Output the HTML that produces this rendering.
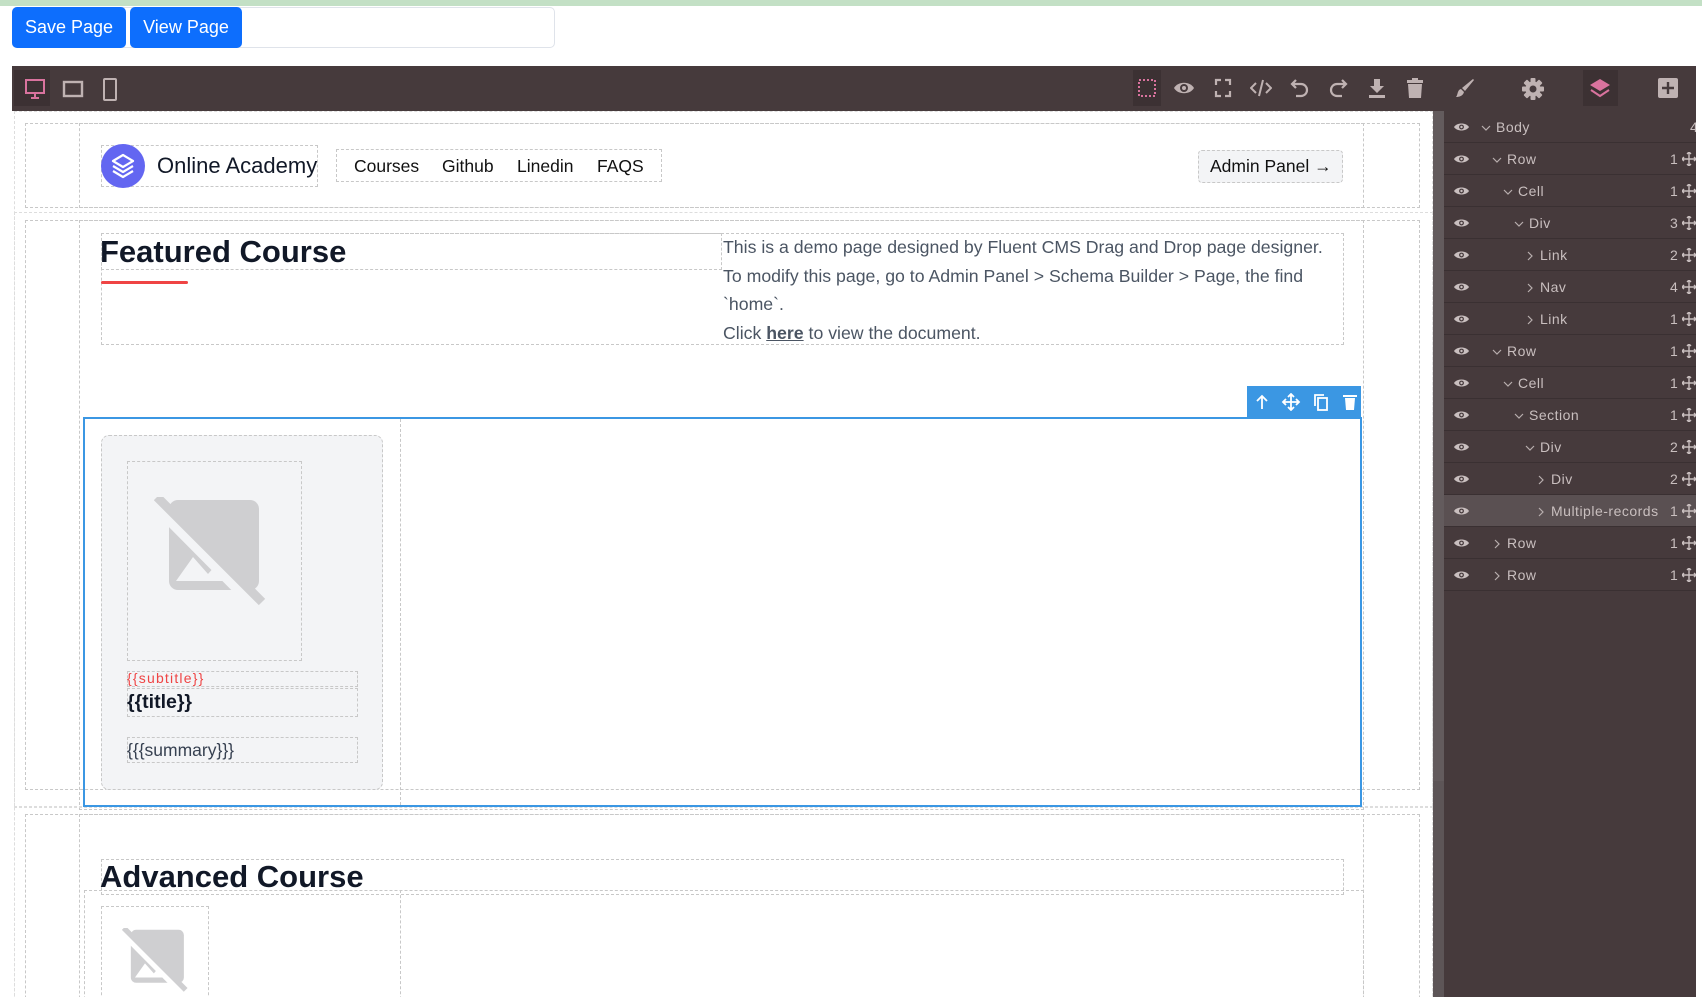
<!DOCTYPE html>
<html><head><meta charset="utf-8"><style>
*{box-sizing:border-box;margin:0;padding:0}
html,body{width:1702px;height:997px;overflow:hidden}
body{background:#fff;font-family:"Liberation Sans",sans-serif;position:relative}
#wrap{position:absolute;left:0;top:0;width:1702px;height:997px;overflow:hidden}
.a{position:absolute}
.d{position:absolute;border:1px dashed #c8c8c8}
.btn{position:absolute;top:7px;height:41px;background:#0d6efd;color:#fff;font-size:18px;border-radius:5px;line-height:41px;text-align:center}
.tb{position:absolute;top:66px;left:12px;width:1684px;height:45px;background:#463a3c}
.ic{position:absolute;top:78px}
.lp{position:absolute;left:1444px;top:111px;width:252px;height:886px;background:#463a3c;overflow:hidden}
.lr{position:absolute;left:0;width:252px;height:32px;border-bottom:1px solid #3a3032;color:#c9bfbf;font-size:14px;letter-spacing:.5px}
.lr span{position:absolute;top:8px}
.eye{position:absolute;left:10px;top:11px}
.n{position:absolute;left:226px;top:8px}
.mv{position:absolute;left:238px;top:9px}
.ch{position:absolute;top:12px}
</style></head><body><div id="wrap">
<div class="a" style="left:0;top:0;width:1702px;height:6px;background:#c3e0c5"></div>
<div class="a" style="left:12px;top:7px;width:543px;height:41px;border:1px solid #dfe3ea;border-radius:5px"></div>
<div class="btn" style="left:12px;width:114px">Save Page</div>
<div class="btn" style="left:130px;width:112px">View Page</div>

<div class="tb"></div>
<div class="a" style="left:14px;top:70px;width:36px;height:36px;background:#3c3133"></div>
<svg class="ic" style="left:24px" width="22" height="22" viewBox="0 0 22 22" fill="none" stroke="#d9739e" stroke-width="2"><rect x="2" y="2" width="18" height="13"/><path d="M11 15v4M7 20h8"/></svg>
<svg class="ic" style="left:62px" width="22" height="22" viewBox="0 0 22 22" fill="none" stroke="#bfb2b2" stroke-width="2.4"><rect x="2" y="4" width="18" height="14"/></svg>
<svg class="ic" style="left:102px" width="16" height="24" viewBox="0 0 16 24" fill="none" stroke="#bfb2b2" stroke-width="2"><rect x="2" y="1" width="12" height="21" rx="1"/></svg>
<div class="a" style="left:1133px;top:70px;width:28px;height:36px;background:#3c3133"></div>
<svg class="ic" style="left:1137px" width="20" height="20"><rect x="2" y="2" width="16" height="16" fill="none" stroke="#d9739e" stroke-width="2" stroke-dasharray="2 2"/></svg>
<svg class="ic" style="left:1173px" width="22" height="20" viewBox="0 0 22 20"><path d="M1 10C5 3 17 3 21 10C17 17 5 17 1 10Z" fill="#bfb2b2"/><circle cx="11" cy="10" r="4" fill="#463a3c"/><circle cx="11" cy="10" r="2" fill="#bfb2b2"/></svg>
<svg class="ic" style="left:1214px" width="18" height="20" fill="none" stroke="#bfb2b2" stroke-width="2.2"><path d="M2 7V2h5M11 2h5v5M16 13v5h-5M7 18H2v-5"/></svg>
<svg class="ic" style="left:1250px" width="22" height="20" fill="none" stroke="#bfb2b2" stroke-width="2"><path d="M6 5L1 10l5 5M16 5l5 5-5 5M13 2L9 18"/></svg>
<svg class="ic" style="left:1290px" width="20" height="20" fill="none" stroke="#bfb2b2" stroke-width="2.2"><path d="M6 2L2 6l4 4M2 6h9a6 6 0 010 12H6"/></svg>
<svg class="ic" style="left:1328px" width="20" height="20" fill="none" stroke="#bfb2b2" stroke-width="2.2"><path d="M14 2l4 4-4 4M18 6H9a6 6 0 000 12h5"/></svg>
<svg class="ic" style="left:1368px" width="18" height="20" fill="#bfb2b2"><path d="M6 1h6v7h4l-7 7-7-7h4z"/><rect x="1" y="17" width="16" height="3"/></svg>
<svg class="ic" style="left:1407px" width="16" height="20" fill="#bfb2b2"><rect x="0" y="2" width="16" height="3"/><rect x="5" y="0" width="6" height="2"/><path d="M1 6h14l-1 14H2z"/></svg>
<svg class="ic" style="left:1455px" width="20" height="20" fill="#bfb2b2"><path d="M18 1l1 1-9 11-3-3z"/><path d="M6 11l3 3c-1 4-5 5-8 5 2-2 1-7 5-8z"/></svg>
<svg class="ic" style="left:1522px" width="22" height="22" viewBox="0 0 22 22"><g fill="#bfb2b2"><circle cx="11" cy="11" r="7.5"/><rect x="8.5" y="0" width="5" height="22" rx="1"/><rect x="8.5" y="0" width="5" height="22" rx="1" transform="rotate(45 11 11)"/><rect x="8.5" y="0" width="5" height="22" rx="1" transform="rotate(90 11 11)"/><rect x="8.5" y="0" width="5" height="22" rx="1" transform="rotate(135 11 11)"/></g><circle cx="11" cy="11" r="3.5" fill="#463a3c"/></svg>
<div class="a" style="left:1583px;top:70px;width:35px;height:36px;background:#3c3133"></div>
<svg class="ic" style="left:1589px" width="22" height="22" viewBox="0 0 22 22"><path d="M11 1l10 6-10 6L1 7z" fill="#d9739e"/><path d="M2 12l9 6 9-6" fill="none" stroke="#d9739e" stroke-width="2"/></svg>
<svg class="ic" style="left:1658px" width="20" height="20"><rect width="20" height="20" rx="2" fill="#bfb2b2"/><path d="M10 4v12M4 10h12" stroke="#463a3c" stroke-width="2.4"/></svg>

<div class="a" style="left:1433px;top:111px;width:11px;height:886px;background:#5d5557"></div>
<div class="a" style="left:1433px;top:111px;width:11px;height:670px;background:#635b5d"></div>
<div class="d" style="left:14px;top:111px;width:1419px;height:920px;border-color:#ddd"></div>
<div class="d" style="left:25px;top:123px;width:1395px;height:85px"></div>
<div class="d" style="left:79px;top:123px;width:1285px;height:85px"></div>
<div class="d" style="left:101px;top:145px;width:217px;height:42px"></div>
<svg class="a" style="left:100px;top:143px" width="46" height="46" viewBox="0 0 46 46"><circle cx="23" cy="23" r="22" fill="#6366f1"/><path d="M23 12l10 6-10 6-10-6z M13 23l10 6 10-6 M13 28l10 6 10-6" fill="none" stroke="#fff" stroke-width="2.2" stroke-linejoin="round"/></svg>
<div class="a" style="left:157px;top:153px;font-size:22px;color:#111827">Online Academy</div>
<div class="d" style="left:336px;top:149px;width:326px;height:33px"></div>
<div class="a" style="left:354px;top:156px;font-size:17.5px;color:#111">Courses</div>
<div class="a" style="left:442px;top:156px;font-size:17.5px;color:#111">Github</div>
<div class="a" style="left:517px;top:156px;font-size:17.5px;color:#111">Linedin</div>
<div class="a" style="left:597px;top:156px;font-size:17.5px;color:#111">FAQS</div>
<div class="d" style="left:1198px;top:150px;width:145px;height:33px;background:#f3f4f6;border-radius:4px"></div>
<div class="a" style="left:1210px;top:156px;font-size:17.5px;color:#111">Admin Panel →</div>

<div class="d" style="left:14px;top:212px;width:1419px;height:595px;border-color:#ddd"></div>
<div class="d" style="left:25px;top:220px;width:1395px;height:570px"></div>
<div class="d" style="left:79px;top:220px;width:1285px;height:590px"></div>
<div class="d" style="left:101px;top:233px;width:1243px;height:112px"></div>
<div class="d" style="left:101px;top:233px;width:621px;height:37px"></div>
<div class="a" style="left:100px;top:234px;font-size:31px;font-weight:600;color:#111827">Featured Course</div>
<div class="a" style="left:101px;top:281px;width:87px;height:3px;background:#ef4444;border-radius:2px"></div>
<div class="a" style="left:723px;top:233px;font-size:17.7px;line-height:28.7px;color:#4b5563">This is a demo page designed by Fluent CMS Drag and Drop page designer.<br>To modify this page, go to Admin Panel &gt; Schema Builder &gt; Page, the find<br>`home`.<br>Click <u style="font-weight:bold">here</u> to view the document.</div>

<div class="a" style="left:1247px;top:386px;width:114px;height:31px;background:#3b97e3"></div>
<svg class="a" style="left:1253px;top:393px" width="104" height="18" fill="none" stroke="#fff" stroke-width="1.8"><path d="M9 16V3M4 8l5-5 5 5"/><path d="M38 1v16M30 9h16M35 4l3-3 3 3M35 14l3 3 3-3M33 6l-3 3 3 3M43 6l3 3-3 3"/><rect x="65" y="5" width="9" height="12"/><path d="M62 13V2h9"/><path d="M92 5h10l-1 12h-8z" fill="#fff" stroke="none"/><rect x="90" y="2" width="14" height="2" fill="#fff" stroke="none"/></svg>
<div class="a" style="left:83px;top:417px;width:1279px;height:390px;border:2px solid #3b97e3"></div>
<div class="d" style="left:400px;top:419px;width:1px;height:386px;border-width:0 0 0 1px"></div>
<div class="d" style="left:101px;top:435px;width:282px;height:355px;background:#f3f4f6;border-radius:8px"></div>
<div class="d" style="left:127px;top:461px;width:175px;height:200px"></div>
<svg class="a" style="left:154px;top:497px" width="112" height="112" viewBox="0 0 112 112"><rect x="15" y="3" width="90" height="90" rx="9" fill="#cfcfd1"/><path d="M0 5L100 106" stroke="#f3f4f6" stroke-width="14"/><path d="M3 0L108 105" stroke="#cfcfd1" stroke-width="9"/><path d="M22 84l17-24 15 17 7-8 15 15z" fill="#f3f4f6"/></svg>
<div class="d" style="left:127px;top:671px;width:231px;height:16px"></div>
<div class="a" style="left:127px;top:670px;font-size:14px;letter-spacing:1.2px;color:#ef4444">{{subtitle}}</div>
<div class="d" style="left:127px;top:688px;width:231px;height:29px"></div>
<div class="a" style="left:127px;top:691px;font-size:19.5px;font-weight:600;color:#111827">{{title}}</div>
<div class="d" style="left:127px;top:737px;width:231px;height:26px"></div>
<div class="a" style="left:127px;top:740px;font-size:17.5px;color:#374151">{{{summary}}}</div>

<div class="d" style="left:14px;top:807px;width:1419px;height:240px;border-color:#ddd"></div>
<div class="d" style="left:25px;top:814px;width:1395px;height:240px"></div>
<div class="d" style="left:79px;top:814px;width:1285px;height:240px"></div>
<div class="d" style="left:101px;top:859px;width:1243px;height:36px"></div>
<div class="a" style="left:100px;top:859px;font-size:31px;font-weight:600;color:#111827">Advanced Course</div>
<div class="d" style="left:84px;top:890px;width:1280px;height:160px"></div>
<div class="d" style="left:400px;top:890px;width:1px;height:160px;border-width:0 0 0 1px"></div>
<div class="d" style="left:101px;top:906px;width:108px;height:140px"></div>
<svg class="a" style="left:122px;top:928px" width="66" height="66" viewBox="0 0 112 112"><rect x="15" y="3" width="90" height="90" rx="9" fill="#cfcfd1"/><path d="M0 5L100 106" stroke="#fff" stroke-width="14"/><path d="M3 0L108 105" stroke="#cfcfd1" stroke-width="9"/><path d="M22 84l17-24 15 17 7-8 15 15z" fill="#fff"/></svg>

<div class="lp">
<svg width="0" height="0" style="position:absolute"><defs><symbol id="e" viewBox="0 0 16 10"><path d="M0 5C3 0 13 0 16 5C13 10 3 10 0 5Z" fill="#c9bfbf"/><circle cx="8" cy="5" r="2.6" fill="#463a3c"/><circle cx="8" cy="5" r="1.3" fill="#c9bfbf"/></symbol><symbol id="m" viewBox="0 0 14 14"><path d="M7 0v14M0 7h14M5 2l2-2 2 2M5 12l2 2 2-2M2 5L0 7l2 2M12 5l2 2-2 2" fill="none" stroke="#c9bfbf" stroke-width="1.4"/></symbol><symbol id="dn" viewBox="0 0 10 10"><path d="M1 3l4 4 4-4" fill="none" stroke="#b8aeae" stroke-width="1.2"/></symbol><symbol id="rt" viewBox="0 0 10 10"><path d="M3 1l4 4-4 4" fill="none" stroke="#b8aeae" stroke-width="1.2"/></symbol></defs></svg>
<div class="lr" style="top:0"><svg class="eye" width="15" height="10"><use href="#e"/></svg><svg class="ch" style="left:37px" width="10" height="10"><use href="#dn"/></svg><span style="left:52px">Body</span><span class="n" style="left:246px">4</span></div>
<div class="lr" style="top:32px"><svg class="eye" width="15" height="10"><use href="#e"/></svg><svg class="ch" style="left:48px" width="10" height="10"><use href="#dn"/></svg><span style="left:63px">Row</span><span class="n">1</span><svg class="mv" width="14" height="14"><use href="#m"/></svg></div>
<div class="lr" style="top:64px"><svg class="eye" width="15" height="10"><use href="#e"/></svg><svg class="ch" style="left:59px" width="10" height="10"><use href="#dn"/></svg><span style="left:74px">Cell</span><span class="n">1</span><svg class="mv" width="14" height="14"><use href="#m"/></svg></div>
<div class="lr" style="top:96px"><svg class="eye" width="15" height="10"><use href="#e"/></svg><svg class="ch" style="left:70px" width="10" height="10"><use href="#dn"/></svg><span style="left:85px">Div</span><span class="n">3</span><svg class="mv" width="14" height="14"><use href="#m"/></svg></div>
<div class="lr" style="top:128px"><svg class="eye" width="15" height="10"><use href="#e"/></svg><svg class="ch" style="left:81px" width="10" height="10"><use href="#rt"/></svg><span style="left:96px">Link</span><span class="n">2</span><svg class="mv" width="14" height="14"><use href="#m"/></svg></div>
<div class="lr" style="top:160px"><svg class="eye" width="15" height="10"><use href="#e"/></svg><svg class="ch" style="left:81px" width="10" height="10"><use href="#rt"/></svg><span style="left:96px">Nav</span><span class="n">4</span><svg class="mv" width="14" height="14"><use href="#m"/></svg></div>
<div class="lr" style="top:192px"><svg class="eye" width="15" height="10"><use href="#e"/></svg><svg class="ch" style="left:81px" width="10" height="10"><use href="#rt"/></svg><span style="left:96px">Link</span><span class="n">1</span><svg class="mv" width="14" height="14"><use href="#m"/></svg></div>
<div class="lr" style="top:224px"><svg class="eye" width="15" height="10"><use href="#e"/></svg><svg class="ch" style="left:48px" width="10" height="10"><use href="#dn"/></svg><span style="left:63px">Row</span><span class="n">1</span><svg class="mv" width="14" height="14"><use href="#m"/></svg></div>
<div class="lr" style="top:256px"><svg class="eye" width="15" height="10"><use href="#e"/></svg><svg class="ch" style="left:59px" width="10" height="10"><use href="#dn"/></svg><span style="left:74px">Cell</span><span class="n">1</span><svg class="mv" width="14" height="14"><use href="#m"/></svg></div>
<div class="lr" style="top:288px"><svg class="eye" width="15" height="10"><use href="#e"/></svg><svg class="ch" style="left:70px" width="10" height="10"><use href="#dn"/></svg><span style="left:85px">Section</span><span class="n">1</span><svg class="mv" width="14" height="14"><use href="#m"/></svg></div>
<div class="lr" style="top:320px"><svg class="eye" width="15" height="10"><use href="#e"/></svg><svg class="ch" style="left:81px" width="10" height="10"><use href="#dn"/></svg><span style="left:96px">Div</span><span class="n">2</span><svg class="mv" width="14" height="14"><use href="#m"/></svg></div>
<div class="lr" style="top:352px"><svg class="eye" width="15" height="10"><use href="#e"/></svg><svg class="ch" style="left:92px" width="10" height="10"><use href="#rt"/></svg><span style="left:107px">Div</span><span class="n">2</span><svg class="mv" width="14" height="14"><use href="#m"/></svg></div>
<div class="lr" style="top:384px;background:#5a5052"><svg class="eye" width="15" height="10"><use href="#e"/></svg><svg class="ch" style="left:92px" width="10" height="10"><use href="#rt"/></svg><span style="left:107px">Multiple-records</span><span class="n">1</span><svg class="mv" width="14" height="14"><use href="#m"/></svg></div>
<div class="lr" style="top:416px"><svg class="eye" width="15" height="10"><use href="#e"/></svg><svg class="ch" style="left:48px" width="10" height="10"><use href="#rt"/></svg><span style="left:63px">Row</span><span class="n">1</span><svg class="mv" width="14" height="14"><use href="#m"/></svg></div>
<div class="lr" style="top:448px"><svg class="eye" width="15" height="10"><use href="#e"/></svg><svg class="ch" style="left:48px" width="10" height="10"><use href="#rt"/></svg><span style="left:63px">Row</span><span class="n">1</span><svg class="mv" width="14" height="14"><use href="#m"/></svg></div>
</div>
</div></body></html>
